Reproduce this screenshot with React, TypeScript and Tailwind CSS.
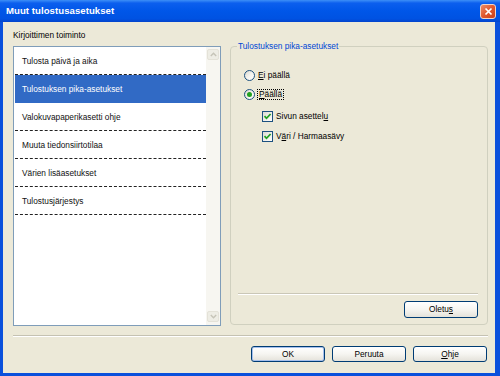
import React from 'react';

const font = { fontFamily: '"Liberation Sans", Arial, sans-serif' };

const items = [
  'Tulosta päivä ja aika',
  'Tulostuksen pika-asetukset',
  'Valokuvapaperikasetti ohje',
  'Muuta tiedonsiirtotilaa',
  'Värien lisäasetukset',
  'Tulostusjärjestys',
];

const Radio: React.FC<{ checked?: boolean }> = ({ checked }) => (
  <span className="w-[11px] h-[11px] rounded-full border border-[#1c5180] bg-gradient-to-br from-[#d8d7cf] via-[#f4f3ee] to-white flex items-center justify-center shrink-0">
    {checked && <span className="w-[5px] h-[5px] rounded-full bg-[#21a121]" />}
  </span>
);

const Check: React.FC = () => (
  <span className="w-[11px] h-[11px] border border-[#1c5180] bg-gradient-to-br from-[#dcdbd3] to-white flex items-center justify-center shrink-0">
    <svg width="9" height="9" viewBox="0 0 9 9">
      <path d="M1.5 4.2 L3.5 6.3 L7.6 2" fill="none" stroke="#21a121" strokeWidth="1.8" />
    </svg>
  </span>
);

const XpButton: React.FC<{ children: React.ReactNode; primary?: boolean; className?: string }> = ({
  children,
  primary,
  className = '',
}) => (
  <button
    className={`w-[74px] h-[16px] border border-[#003c74] rounded-[3px] bg-gradient-to-b from-white via-[#f6f5f1] to-[#e4e2da] text-[8.3px] leading-none text-black flex items-center justify-center ${
      primary ? 'shadow-[inset_0_0_0_1px_#a6c0ec]' : ''
    } ${className}`}
  >
    {children}
  </button>
);

const Arrow: React.FC<{ up?: boolean }> = ({ up }) => (
  <div className="w-[12px] h-[11px] rounded-[2px] bg-[#eeede5] border border-[#e4e2d8] flex items-center justify-center">
    <svg width="7" height="5" viewBox="0 0 7 5">
      <path d={up ? 'M0.8 4 L3.5 1.2 L6.2 4' : 'M0.8 1 L3.5 3.8 L6.2 1'} fill="none" stroke="#c6c4b8" strokeWidth="1.4" />
    </svg>
  </div>
);

export default function App() {
  return (
    <div className="w-[500px] h-[376px] flex flex-col overflow-hidden bg-[#0a50dc]" style={font}>
      {/* Title bar */}
      <div className="h-[22px] shrink-0 flex items-center pl-[6px] pr-[4px] bg-[linear-gradient(to_bottom,#3d8ff7_0%,#0c5fee_14%,#0056e8_50%,#0052e2_85%,#0444cc_100%)]">
        <span className="text-white font-bold text-[9.6px] flex-1 tracking-[0.05px]">Muut tulostusasetukset</span>
        <div className="w-[16px] h-[15px] rounded-[3px] border border-[#f2d3c6] bg-gradient-to-br from-[#ec8a63] via-[#e0582e] to-[#c9401a] flex items-center justify-center mt-[1px]">
          <svg width="9" height="9" viewBox="0 0 9 9">
            <path d="M1.5 1.5 L7.5 7.5 M7.5 1.5 L1.5 7.5" stroke="white" strokeWidth="1.7" />
          </svg>
        </div>
      </div>

      {/* Body */}
      <div className="flex-1 ml-[3px] mr-[5px] mb-[3px] bg-[#ece9d8] pl-[10px] pr-[7px] pt-[8px] flex flex-col">
        <div className="flex items-start">
          {/* Left list */}
          <div className="w-[208px] flex flex-col">
            <div className="text-[8.3px] leading-[10px] text-black mb-[6px]">Kirjoittimen toiminto</div>
            <div className="h-[280px] border border-[#7f9db9] bg-white flex">
              <div className="flex-1 flex flex-col pl-[1px]">
                {items.map((it, i) => (
                  <div
                    key={it}
                    className={`h-[28px] flex items-center pl-[7px] pt-[2px] text-[8.3px] ${
                      i === 1
                        ? 'bg-[#316ac5] text-white border-b border-transparent'
                        : 'text-[#111] border-b border-dashed border-[#222]'
                    }`}
                  >
                    {it}
                  </div>
                ))}
              </div>
              <div className="w-[14px] bg-[#f7f6f1] flex flex-col justify-between items-center pt-[2px] pb-[3px]">
                <Arrow up />
                <Arrow />
              </div>
            </div>
          </div>

          {/* Group box */}
          <fieldset className="ml-[9px] mt-[11px] w-[258px] h-[284px] border border-[#d0d0bf] rounded-[4px]">
            <legend className="ml-[6px] px-[1px] text-[8.3px] leading-[10px] text-[#0046d5]">
              Tulostuksen pika-asetukset
            </legend>
            <div className="flex flex-col text-[8.3px] text-black">
              <div className="flex items-center h-[12px] mt-[18px] ml-[13px] gap-[3px]">
                <Radio />
                <span>
                  <span className="underline">E</span>i päällä
                </span>
              </div>
              <div className="flex items-center h-[12px] mt-[7px] ml-[13px] gap-[2px]">
                <Radio checked />
                <span className="border border-dotted border-black px-[1px] leading-[9px]">
                  <span className="underline">P</span>äällä
                </span>
              </div>
              <div className="flex items-center h-[12px] mt-[10px] ml-[31px] gap-[3px]">
                <Check />
                <span>
                  Sivun asettel<span className="underline">u</span>
                </span>
              </div>
              <div className="flex items-center h-[12px] mt-[8px] ml-[31px] gap-[3px]">
                <Check />
                <span>
                  V<span className="underline">ä</span>ri / Harmaasävy
                </span>
              </div>
              <div className="mt-[151px] ml-[7px] mr-[9px] h-[2px] border-t border-[#cac7b7] border-b-white border-b" />
              <div className="flex justify-end mr-[9px] mt-[6px]">
                <XpButton className="h-[17px]">
                  Oletu<span className="underline">s</span>
                </XpButton>
              </div>
            </div>
          </fieldset>
        </div>

        <div className="mt-[9px] h-[2px] border-t border-[#c5c2b2] border-b border-b-white" />

        <div className="flex justify-end gap-[7px] mt-[9px] mr-[1px]">
          <XpButton primary>OK</XpButton>
          <XpButton>Peruuta</XpButton>
          <XpButton>
            <span className="underline">O</span>hje
          </XpButton>
        </div>
      </div>
    </div>
  );
}
